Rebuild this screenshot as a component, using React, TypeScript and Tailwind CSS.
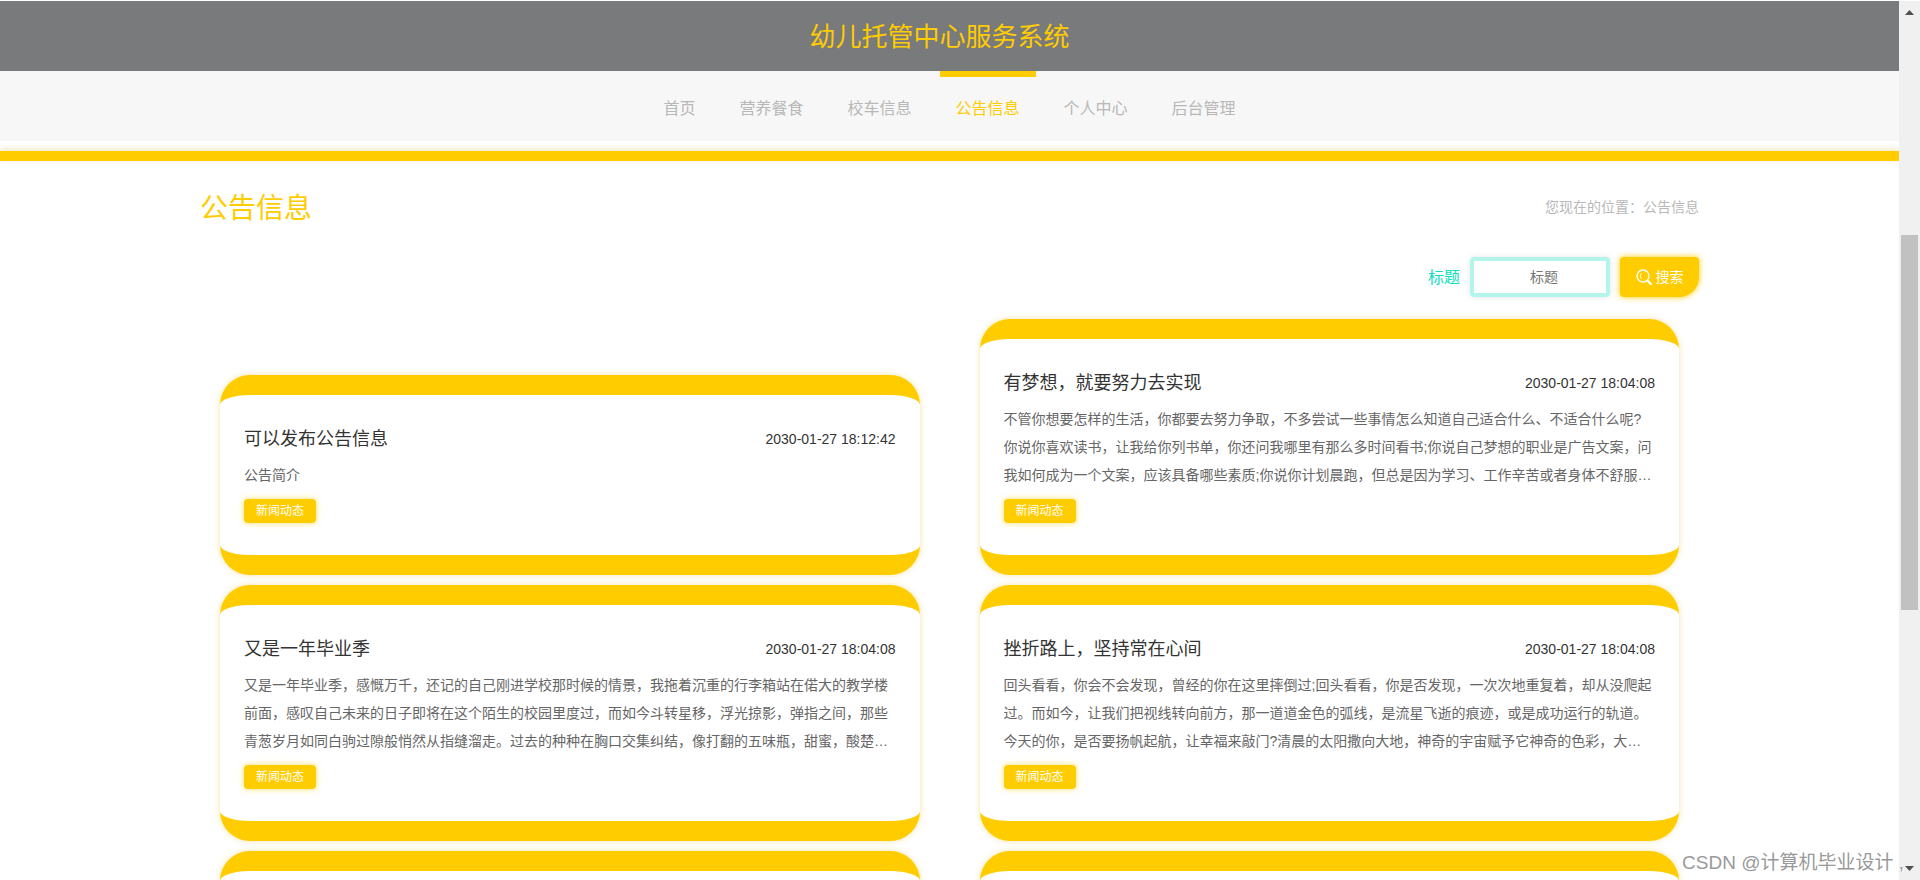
import React from 'react'

const NAV = ['首页', '营养餐食', '校车信息', '公告信息', '个人中心', '后台管理']
const ACTIVE = '公告信息'

interface Notice {
  title: string
  time: string
  text: string
  tag: string
}

const NOTICES: Notice[] = [
  { title: '可以发布公告信息', time: '2030-01-27 18:12:42', text: '公告简介', tag: '新闻动态' },
  {
    title: '有梦想，就要努力去实现',
    time: '2030-01-27 18:04:08',
    text: '不管你想要怎样的生活，你都要去努力争取，不多尝试一些事情怎么知道自己适合什么、不适合什么呢?你说你喜欢读书，让我给你列书单，你还问我哪里有那么多时间看书;你说自己梦想的职业是广告文案，问我如何成为一个文案，应该具备哪些素质;你说你计划晨跑，但总是因为学习、工作辛苦或者身体不舒服…',
    tag: '新闻动态',
  },
  {
    title: '又是一年毕业季',
    time: '2030-01-27 18:04:08',
    text: '又是一年毕业季，感慨万千，还记的自己刚进学校那时候的情景，我拖着沉重的行李箱站在偌大的教学楼前面，感叹自己未来的日子即将在这个陌生的校园里度过，而如今斗转星移，浮光掠影，弹指之间，那些青葱岁月如同白驹过隙般悄然从指缝溜走。过去的种种在胸口交集纠结，像打翻的五味瓶，甜蜜，酸楚…',
    tag: '新闻动态',
  },
  {
    title: '挫折路上，坚持常在心间',
    time: '2030-01-27 18:04:08',
    text: '回头看看，你会不会发现，曾经的你在这里摔倒过;回头看看，你是否发现，一次次地重复着，却从没爬起过。而如今，让我们把视线转向前方，那一道道金色的弧线，是流星飞逝的痕迹，或是成功运行的轨道。今天的你，是否要扬帆起航，让幸福来敲门?清晨的太阳撒向大地，神奇的宇宙赋予它神奇的色彩，大…',
    tag: '新闻动态',
  },
]

const cardClass =
  'rounded-[30px] border-y-[20px] border-[#ffcc00] bg-white px-6 pt-[22px] pb-8 shadow-[0_0_6px_rgba(230,190,40,0.4)]'

function NoticeCard({ notice }: { notice: Notice }) {
  return (
    <article className={cardClass}>
      <div className="flex h-[44px] items-center justify-between">
        <h3 className="text-[18px] text-[#333]">{notice.title}</h3>
        <time className="text-sm text-[#333]">{notice.time}</time>
      </div>
      <p className="line-clamp-3 text-sm leading-7 text-[#666]">{notice.text}</p>
      <span className="mt-[10px] flex h-6 w-[72px] items-center justify-center rounded bg-[#ffcc00] text-xs text-white shadow-[0_0_6px_rgba(255,204,0,0.6)]">
        {notice.tag}
      </span>
    </article>
  )
}

function SearchIcon() {
  return (
    <svg viewBox="0 0 16 16" className="h-4 w-4" fill="none" stroke="currentColor" strokeLinecap="round">
      <circle cx="7" cy="7" r="6" strokeWidth="1.3" />
      <path d="M5.4 4.2a3.6 3.6 0 0 0 0 5.400" strokeWidth="1" />
      <path d="M11.8 12l3 3" strokeWidth="2.4" />
    </svg>
  )
}

function Scrollbar() {
  return (
    <div aria-hidden="true" className="mt-px flex w-[21px] shrink-0 flex-col items-center bg-[#f0f0f0]">
      <svg viewBox="0 0 9 5" className="mt-[9px] h-[5px] w-[9px] fill-[#505050]">
        <path d="M0 5L4.500 0L9 5z" />
      </svg>
      <div className="flex w-full flex-1 flex-col items-center py-2">
        <div className="grow-[212]" />
        <div className="w-[17px] grow-[375] bg-[#c1c1c1]" />
        <div className="grow-[248]" />
      </div>
      <svg viewBox="0 0 9 5" className="mb-[9px] h-[5px] w-[9px] fill-[#505050]">
        <path d="M0 0L4.500 5L9 0z" />
      </svg>
    </div>
  )
}

export default function App() {
  return (
    <div
      lang="zh-CN"
      className="relative flex h-screen overflow-hidden bg-white font-['Liberation_Sans','Noto_Sans_CJK_SC',sans-serif]"
    >
      <div className="min-w-0 flex-1 overflow-hidden pt-px">
        <header>
          <div className="flex h-[70px] items-center justify-center bg-[#797a7b] pt-[2px] pr-5">
            <h1 className="text-[26px] text-[#ffcc00]">幼儿托管中心服务系统</h1>
          </div>
          <nav className="flex h-[70px] justify-center gap-3 bg-[#f7f7f7]">
            {NAV.map((item) => (
              <a
                key={item}
                href="#"
                className={
                  item === ACTIVE
                    ? 'flex items-center border-t-[6px] border-[#ffcc00] px-4 text-base text-[#ffcc00]'
                    : 'flex items-center border-t-[6px] border-transparent px-4 text-base text-[#b8b8b8]'
                }
              >
                {item}
              </a>
            ))}
          </nav>
          <div className="mt-[10px] h-[10px] bg-[#ffcc00] shadow-[0_-2px_6px_rgba(200,160,0,0.25)]" />
        </header>

        <main className="mx-auto max-w-[1499px]">
          <div className="flex h-24 items-center justify-between">
            <h2 className="text-[28px] text-[#ffcc00]">公告信息</h2>
            <p className="pb-1 text-sm text-[#b8b8b8]">您现在的位置：公告信息</p>
          </div>

          <form className="flex items-center justify-end gap-[10px]" onSubmit={(e) => e.preventDefault()}>
            <label htmlFor="title" className="pt-[2px] text-base text-[#11ddbb]">
              标题
            </label>
            <input
              id="title"
              type="text"
              placeholder="标题"
              className="h-10 w-[140px] rounded border-4 border-[#b3f5ea] pr-1 pl-3 text-center text-sm shadow-[0_0_6px_rgba(0,0,0,0.1)] outline-none placeholder:text-[#757575]"
            />
            <button
              type="submit"
              className="flex h-10 w-[79px] items-center justify-center gap-1 rounded rounded-br-[20px] bg-[#ffcc00] text-sm text-white shadow-[0_0_6px_#ffcc00]"
            >
              <SearchIcon />
              搜索
            </button>
          </form>

          <div className="mt-[22px] grid grid-cols-2 items-end gap-x-[60px] gap-y-[10px] px-5">
            {NOTICES.map((notice) => (
              <NoticeCard key={notice.title} notice={notice} />
            ))}
            <div className={cardClass} />
            <div className={cardClass} />
          </div>
        </main>
      </div>

      <Scrollbar />

      <p className="absolute right-4 bottom-[2px] text-[19px] leading-[30px] text-[#999] [text-shadow:1px_1px_0_#fff]">
        CSDN @计算机毕业设计 ,
      </p>
    </div>
  )
}
